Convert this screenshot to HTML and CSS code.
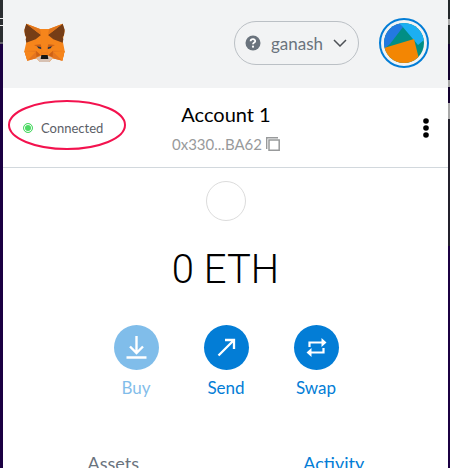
FILE: index.html
```html
<!DOCTYPE html>
<html lang="en">
<head>
<meta charset="utf-8">
<meta name="viewport" content="width=device-width, initial-scale=1">
<title>Wallet</title>
<link rel="stylesheet" href="styles.css">
</head>
<body>
<div class="edge edge-left"></div>
<div class="wallet">
  <header class="topbar">
    <a class="logo" href="#" aria-label="Home">
      <svg width="41" height="40" viewBox="0 0 123 120">
        <path fill="#f6851b" d="M7 2 48 18H75L116 2 122 25 116 53 122 84 115 113 86 106 77 116H47L37 106 10 113 1 84 8 53 1 25Z"/>
        <path fill="#763d16" d="M7 2 51 36 35 49 7 59 5 49 7 42 3 37 1 20ZM116 2 72 36 88 49 116 59 118 49 116 42 120 37 122 20Z"/>
        <path fill="#e2761b" d="M7 2 48 18 51 36ZM116 2 75 18 72 36Z"/>
        <path fill="#e4751f" d="M1 84 36 83 37 106 10 113ZM122 84 87 83 86 106 115 113Z"/>
        <path fill="#f6851b" d="M1 84 36 86 10 113ZM122 84 87 86 115 113Z"/>
        <path fill="#cd6116" d="M30 66 50 64 54 79ZM93 66 73 64 69 79ZM36 83 50 96 37 103ZM87 83 73 96 86 103Z"/>
        <path fill="#ee7d1d" d="M51 36 54 79 50 96 57 92H67L73 96 69 79 72 36 68 88H55Z"/>
        <path fill="#233447" d="M39 70 51 73 51 78 43 76ZM84 70 72 73 72 78 80 76Z"/>
        <path fill="#d7c1b3" d="M37 104 51 98H72L86 104 76 117H47Z"/>
        <path fill="#161616" d="M52 96H71L73 108H50Z"/>
      </svg>
    </a>
    <button class="network" type="button">
      <svg width="16" height="16" viewBox="0 0 16 16">
        <circle cx="8" cy="8" r="7.5" fill="#6a737d"/>
        <path d="M5.6 6.2C5.8 3.4 10.6 3.600 10.2 6.4C10 7.7 8 7.6 8 9.3" fill="none" stroke="#fff" stroke-width="1.8"/>
        <circle cx="8" cy="11.7" r="1.1" fill="#fff"/>
      </svg>
      <span>ganash</span>
      <svg class="chevron" width="14" height="8" viewBox="0 0 14 8"><path d="M1 1 7 7 13 1" fill="none" stroke="#4d5156" stroke-width="1.5"/></svg>
    </button>
    <button class="avatar" type="button" aria-label="My accounts">
      <svg width="40" height="40" viewBox="0 0 40 40">
        <defs><clipPath id="disc"><circle cx="20" cy="20" r="20"/></clipPath></defs>
        <g clip-path="url(#disc)">
          <path fill="#018e85" d="M0 0H40V40H0Z"/>
          <path fill="#2379e1" d="M0 0H16L19 4 6 21 0 26Z"/>
          <path fill="#1caff2" d="M15 0H40V17L34 22 18 3Z"/>
          <path fill="#f38603" d="M0 25 30 16 36 40H0Z"/>
        </g>
      </svg>
    </button>
  </header>

  <section class="account">
    <button class="status" type="button"><span class="dot"></span>Connected
      <svg class="mark" width="120" height="50" viewBox="0 0 120 50"><ellipse cx="60" cy="25" rx="58" ry="24" fill="none" stroke="#f3124e" stroke-width="2"/></svg>
    </button>
    <button class="identity" type="button">
      <span class="name">Account 1</span>
      <span class="address">0x330...BA62
        <svg width="14" height="14" viewBox="0 0 14 14" fill="none" stroke="#989a9b"><path d="M.7 12V.7H12" stroke-width="1.4"/><path d="M3 3H13.2V13.2H3Z" stroke-width="1.5"/></svg>
      </span>
    </button>
    <button class="more" type="button" aria-label="Account options">
      <svg width="6" height="20" viewBox="0 0 6 20"><circle cx="3" cy="3" r="2.8"/><circle cx="3" cy="10" r="2.8"/><circle cx="3" cy="17" r="2.8"/></svg>
    </button>
  </section>

  <main class="overview">
    <div class="token"></div>
    <div class="balance">0 ETH</div>
    <div class="actions">
      <button class="action" type="button" disabled>
        <span class="disc"><svg width="21" height="23" viewBox="0 0 21 23" fill="none" stroke="#fff" stroke-width="2.4"><path d="M10.5 0V16M4 10.5 10.5 17 17 10.5M.5 21.5H20.5"/></svg></span>
        Buy
      </button>
      <button class="action" type="button">
        <span class="disc"><svg width="19" height="19" viewBox="0 0 19 19" fill="none" stroke="#fff" stroke-width="2.3"><path d="M1.5 17.5 17 2M8 2H17V11"/></svg></span>
        Send
      </button>
      <button class="action" type="button">
        <span class="disc"><svg width="21" height="21" viewBox="0 0 21 21"><path d="M3.5 10V5.5H16M17.5 11V15.5H5" fill="none" stroke="#fff" stroke-width="2.2"/><path d="M15.5 1 20.5 5.5 15.5 10ZM5.5 11 .5 15.5 5.5 20Z" fill="#fff"/></svg></span>
        Swap
      </button>
    </div>
    <nav class="tabs">
      <button type="button">Assets</button>
      <button class="current" type="button">Activity</button>
    </nav>
  </main>
</div>
<div class="edge edge-right"></div>
</body>
</html>
```
FILE: styles.css
```css
* { box-sizing: border-box; }

body {
  margin: 0;
  height: 100vh;
  overflow: hidden;
  display: grid;
  grid-template-columns: 3px 1fr 2px;
  font-family: Lato, "Liberation Sans", sans-serif;
  font-size: 16px;
  color: #000;
}

button {
  border: 0;
  padding: 0;
  background: none;
  font: inherit;
  color: inherit;
}

svg { display: block; flex: none; }

.edge-left {
  background: linear-gradient(#2b2e31 18px, #e8e8e8 18px 19px, #2b2e31 19px 25px, #e8e8e8 25px 26px, #2b2e31 26px 42px, #66646c 42px 44px, #1b0042 44px);
}

.edge-right {
  background: linear-gradient(#23272a 19px, #a9a9a9 19px 25px, #23272a 25px 44px, #12002e 44px 80px, #a9a9a9 80px 87px, #12002e 87px 103px, #a9a9a9 103px 119px, #23202c 119px 246px, #1b0042 246px);
}

.wallet { background: #fff; min-width: 0; }

.topbar {
  height: 88px;
  padding: 0 19px 2px 21px;
  display: flex;
  align-items: center;
  background: #f2f3f4;
}

.logo { margin-right: auto; }

.network {
  width: 125px;
  height: 44px;
  padding: 0 11px 0 10px;
  border: 1px solid #bbc0c5;
  border-radius: 22px;
  display: flex;
  align-items: center;
  gap: 10px;
  font-size: 17px;
  color: #6a737d;
}

.chevron { margin-left: auto; }

.avatar {
  width: 50px;
  height: 50px;
  margin-left: 20px;
  border: 2px solid #037dd6;
  border-radius: 50%;
  display: grid;
  place-items: center;
}

.account {
  height: 80px;
  padding: 0 19px 0 20px;
  border-bottom: 1px solid #d2d8dd;
  display: grid;
  grid-template-columns: 1fr auto 1fr;
  align-items: center;
}

.status {
  position: relative;
  justify-self: start;
  display: flex;
  align-items: center;
  gap: 8px;
  font-size: 13px;
  color: #5b6067;
}

.dot {
  width: 10px;
  height: 10px;
  border: 1px solid #4cd964;
  border-radius: 50%;
  background: #4cd964;
  box-shadow: inset 0 0 0 1px #fff;
}

.mark {
  position: absolute;
  left: -16px;
  top: 50%;
  margin-top: -28px;
}

.identity {
  display: flex;
  flex-direction: column;
  align-items: center;
  gap: 4px;
}

.name { font-size: 20px; line-height: 28px; }

.address {
  display: flex;
  align-items: center;
  gap: 4px;
  font-size: 15px;
  line-height: 24px;
  color: #989a9b;
}

.more { justify-self: end; }

.overview { text-align: center; }

.token {
  width: 40px;
  height: 40px;
  margin: 13px auto 0;
  border: 1px solid #dcdcdc;
  border-radius: 50%;
}

.balance {
  margin-top: 21px;
  font-family: Roboto, sans-serif;
  font-size: 40px;
  font-weight: 300;
  line-height: 56px;
}

.actions {
  margin-top: 27px;
  padding-left: 1px;
  display: flex;
  justify-content: center;
  gap: 45px;
  font-size: 17px;
  color: #037dd6;
}

.action {
  width: 45px;
  display: flex;
  flex-direction: column;
  align-items: center;
  gap: 6px;
  line-height: 24px;
}

.action:disabled { opacity: .5; }

.disc {
  width: 45px;
  height: 45px;
  border-radius: 50%;
  display: grid;
  place-items: center;
  background: #037dd6;
}

.tabs {
  margin-top: 49px;
  padding-right: 4px;
  display: grid;
  grid-template-columns: 1fr 1fr;
  font-size: 18px;
  line-height: 28px;
  color: #6a737d;
}

.current { color: #037dd6; }
```
